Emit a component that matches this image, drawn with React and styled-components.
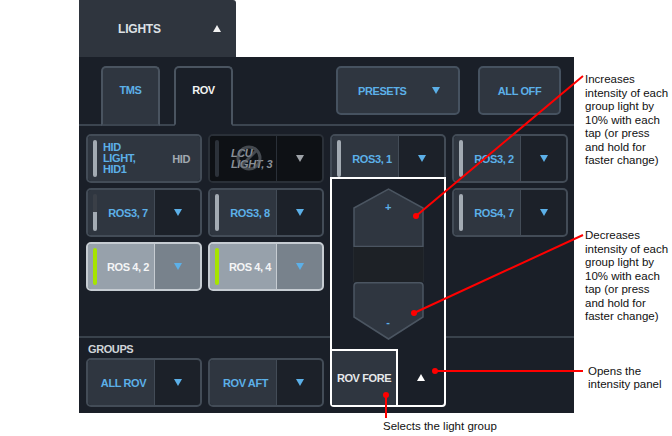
import React from 'react';
import styled, { createGlobalStyle } from 'styled-components';

const GlobalStyle = createGlobalStyle`
  html, body {
    margin: 0;
    padding: 0;
    background: #ffffff;
  }
  body {
    font-family: "Liberation Sans", Arial, sans-serif;
  }
`;

const BLUE = '#5cb0e8';
const PANEL = '#1a1f28';

const Page = styled.div`
  position: relative;
  width: 672px;
  height: 436px;
  overflow: hidden;
  box-sizing: border-box;
  padding-left: 79px;
`;

const Console = styled.div`
  width: 495px;
  display: flex;
  flex-direction: column;
  font-weight: bold;
  font-size: 11px;
  letter-spacing: -0.4px;
`;

const HeaderTab = styled.div`
  width: 157px;
  height: 57px;
  box-sizing: border-box;
  background: #2f353e;
  border-radius: 0 3px 0 0;
  display: flex;
  align-items: center;
  justify-content: space-between;
  padding: 0 15px 0 39px;
  color: #dde1e5;
  font-size: 12px;
  letter-spacing: -0.2px;
`;

const Triangle = styled.span`
  width: 0;
  height: 0;
  border-left: ${(p) => p.$w || 4.5}px solid transparent;
  border-right: ${(p) => p.$w || 4.5}px solid transparent;
  ${(p) => (p.$up ? 'border-bottom' : 'border-top')}: ${(p) => p.$h || 7}px solid ${(p) => p.$color || BLUE};
`;

const Panel = styled.div`
  position: relative;
  height: 356px;
  background: ${PANEL};
  display: flex;
  flex-direction: column;
`;

const TabBar = styled.div`
  height: 69px;
  box-sizing: border-box;
  display: flex;
  align-items: flex-start;
  padding: 9px 13px 0 22px;
  border-bottom: 2px solid #3c4550;
`;

const Tab = styled.div`
  align-self: stretch;
  margin-bottom: -2px;
  width: 59px;
  margin-right: 14px;
  box-sizing: border-box;
  border: 2px solid #4a5460;
  border-bottom: 2px solid ${(p) => (p.$active ? PANEL : '#3c4550')};
  border-radius: 5px 5px 0 0;
  background: ${(p) => (p.$active ? PANEL : '#2f3640')};
  color: ${(p) => (p.$active ? '#f2f2f2' : BLUE)};
  text-align: center;
  padding-top: 15px;
  line-height: 14px;
`;

const ActionButton = styled.div`
  width: ${(p) => p.$width}px;
  height: 49px;
  margin-left: ${(p) => p.$gap};
  box-sizing: border-box;
  background: #2f3640;
  border: 2px solid #465260;
  border-radius: 5px;
  color: ${BLUE};
  display: flex;
  align-items: center;
  justify-content: ${(p) => (p.$split ? 'space-between' : 'center')};
  padding: ${(p) => (p.$split ? '0 18px 0 20px' : '0')};
`;

const Grid = styled.div`
  display: grid;
  grid-template-columns: repeat(4, 116px);
  grid-auto-rows: 49px;
  gap: 5px 6px;
  padding: 8px 6px 0 7px;
`;

const cardColors = {
  normal: { main: '#2f3640', side: '#1c2129', border: '#434c57', text: BLUE },
  selected: { main: '#97a1ab', side: '#78828c', border: '#c6ccd2', text: '#f4f5f6' },
  disabled: { main: '#0e1115', side: '#0e1115', border: '#2a3038', text: '#8a9097' },
};

const Card = styled.div`
  display: flex;
  box-sizing: border-box;
  border-radius: 5px;
  overflow: hidden;
  border: 2px solid ${(p) => cardColors[p.$variant].border};
  background: ${(p) => cardColors[p.$variant].side};
  color: ${(p) => cardColors[p.$variant].text};
`;

const CardMain = styled.div`
  position: relative;
  width: ${(p) => (p.$wide ? 'auto' : '67px')};
  flex: ${(p) => (p.$wide ? '1' : 'none')};
  display: flex;
  align-items: center;
  padding: 0 ${(p) => (p.$wide ? '10px' : '0')} 0 5px;
  box-sizing: border-box;
  background: ${(p) => cardColors[p.$variant].main};
  border-right: ${(p) => (p.$wide ? 'none' : `1px solid ${cardColors[p.$variant].border}`)};
`;

const CardSide = styled.div`
  flex: 1;
  display: flex;
  align-items: center;
  justify-content: center;
`;

const barFill = {
  on: '#a3abb3',
  off: '#2c323a',
  half: 'linear-gradient(to bottom, #3a3f47 50%, #a3abb3 50%)',
  green: '#a6e400',
};

const Bar = styled.span`
  flex: none;
  align-self: stretch;
  width: 4px;
  margin: 4px 0;
  border-radius: 2px;
  background: ${(p) => barFill[p.$level]};
`;

const Label = styled.span`
  flex: 1;
  text-align: center;
  white-space: nowrap;
  padding-left: ${(p) => (p.$afterBar ? 5 : 0)}px;
`;

const StackLabel = styled.span`
  margin-left: ${(p) => p.$offset || 6}px;
  line-height: 11px;
  white-space: pre;
  font-style: ${(p) => (p.$italic ? 'italic' : 'normal')};
`;

const Muted = styled.span`
  margin-left: auto;
  color: #a2a9b0;
`;

const NoSign = styled.svg`
  position: absolute;
  left: 26px;
  top: 9px;
  opacity: 0.6;
`;

const Groups = styled.div`
  margin-top: auto;
  border-top: 2px solid #39424c;
  padding: 4px 6px 6px 7px;
`;

const GroupsLabel = styled.div`
  color: #d0d4d8;
  line-height: 14px;
  margin-left: 2px;
`;

const GroupRow = styled(Grid)`
  padding: 0;
  margin-top: 2px;
`;

const Popup = styled.div`
  position: absolute;
  left: 251px;
  top: 120px;
  width: 116px;
  height: 230px;
  box-sizing: border-box;
  border: 2px solid #ffffff;
  border-radius: 0 0 4px 4px;
  background: ${PANEL};
  display: flex;
  flex-direction: column;
  align-items: center;
  padding-top: 9px;
  z-index: 1;
`;

const Step = styled.div`
  position: relative;
  width: 71px;
  height: ${(p) => p.$h}px;
  color: ${BLUE};
  text-align: center;
  line-height: 14px;
  box-sizing: border-box;
  padding-top: ${(p) => p.$pad}px;
  & > svg {
    position: absolute;
    left: 0;
    top: 0;
  }
  & > span {
    position: relative;
  }
`;

const StepGap = styled.div`
  width: 71px;
  height: 35px;
  box-sizing: border-box;
  background: #1d2126;
  border-left: 1px solid #23282e;
  border-right: 1px solid #23282e;
`;

const PopupFooter = styled.div`
  margin-top: auto;
  align-self: stretch;
  height: 56px;
  display: flex;
`;

const ForeBox = styled.div`
  width: 66px;
  box-sizing: border-box;
  border-top: 2px solid #ffffff;
  border-right: 2px solid #ffffff;
  background: #2f3640;
  color: #e6e8ea;
  display: flex;
  align-items: center;
  justify-content: center;
  white-space: nowrap;
`;

const FooterSide = styled.div`
  flex: 1;
  display: flex;
  align-items: center;
  justify-content: center;
`;

const Overlay = styled.svg`
  position: absolute;
  left: 0;
  top: 0;
  pointer-events: none;
  z-index: 2;
`;

const Callout = styled.div`
  position: absolute;
  left: ${(p) => p.$x}px;
  top: ${(p) => p.$y}px;
  font-family: "Liberation Sans", Arial, sans-serif;
  font-size: 11.5px;
  line-height: ${(p) => p.$lh || 13.5}px;
  color: #111111;
  white-space: pre;
`;

function LightCard({ name, level = 'on', variant = 'normal' }) {
  return (
    <Card $variant={variant}>
      <CardMain $variant={variant}>
        <Bar $level={level} />
        <Label $afterBar>{name}</Label>
      </CardMain>
      <CardSide>
        <Triangle />
      </CardSide>
    </Card>
  );
}

function GroupCard({ name }) {
  return (
    <Card $variant="normal">
      <CardMain $variant="normal">
        <Label>{name}</Label>
      </CardMain>
      <CardSide>
        <Triangle />
      </CardSide>
    </Card>
  );
}

function App() {
  return (
    <Page>
      <GlobalStyle />
      <Console>
        <HeaderTab>
          LIGHTS
          <Triangle $up $color="#f2f2f2" $w={4} />
        </HeaderTab>
        <Panel>
          <TabBar>
            <Tab>TMS</Tab>
            <Tab $active>ROV</Tab>
            <ActionButton $width={124} $gap="auto" $split>
              PRESETS
              <Triangle />
            </ActionButton>
            <ActionButton $width={83} $gap="18px">
              ALL OFF
            </ActionButton>
          </TabBar>

          <Grid>
            <Card $variant="normal">
              <CardMain $variant="normal" $wide>
                <Bar $level="on" />
                <StackLabel>{'HID\nLIGHT,\nHID1'}</StackLabel>
                <Muted>HID</Muted>
              </CardMain>
            </Card>
            <Card $variant="disabled">
              <CardMain $variant="disabled">
                <Bar $level="off" />
                <StackLabel $offset={12} $italic>{'LCU\nLIGHT, 3'}</StackLabel>
                <NoSign width="26" height="26" viewBox="0 0 26 26">
                  <circle cx="13" cy="13" r="11" fill="none" stroke="#6a7078" strokeWidth="3" />
                  <line x1="20.5" y1="5.5" x2="5.5" y2="20.5" stroke="#6a7078" strokeWidth="3" />
                </NoSign>
              </CardMain>
              <CardSide>
                <Triangle $color="#9ea3a8" />
              </CardSide>
            </Card>
            <LightCard name="ROS3, 1" />
            <LightCard name="ROS3, 2" />

            <LightCard name="ROS3, 7" level="half" />
            <LightCard name="ROS3, 8" />
            <div />
            <LightCard name="ROS4, 7" />

            <LightCard name="ROS 4, 2" level="green" variant="selected" />
            <LightCard name="ROS 4, 4" level="green" variant="selected" />
          </Grid>

          <Groups>
            <GroupsLabel>GROUPS</GroupsLabel>
            <GroupRow>
              <GroupCard name="ALL ROV" />
              <GroupCard name="ROV AFT" />
            </GroupRow>
          </Groups>

          <Popup>
            <Step $h={59} $pad={12}>
              <svg width="71" height="59" viewBox="0 0 71 59">
                <path d="M1 20 L35.5 1 L70 20 L70 58.5 L1 58.5 Z" fill="#2f3640" stroke="#4b5561" strokeWidth="1.5" />
              </svg>
              <span>+</span>
            </Step>
            <StepGap />
            <Step $h={58} $pad={33}>
              <svg width="71" height="58" viewBox="0 0 71 58">
                <path d="M1 4 Q1 0.75 4 0.75 L67 0.75 Q70 0.75 70 4 L70 35 L35.5 57 L1 35 Z" fill="#2f3640" stroke="#4b5561" strokeWidth="1.5" />
              </svg>
              <span>-</span>
            </Step>
            <PopupFooter>
              <ForeBox>ROV FORE</ForeBox>
              <FooterSide>
                <Triangle $up $color="#ffffff" />
              </FooterSide>
            </PopupFooter>
          </Popup>
        </Panel>
      </Console>

      <Overlay width="672" height="436" viewBox="0 0 672 436">
        <g stroke="#ff0000" strokeWidth="2" fill="none">
          <line x1="416" y1="216" x2="583" y2="76" />
          <line x1="414" y1="313" x2="583" y2="235" />
          <line x1="435" y1="371" x2="583" y2="371" />
          <line x1="386" y1="395" x2="386" y2="418" />
        </g>
        <g fill="#ff0000">
          <circle cx="416" cy="216" r="3" />
          <circle cx="414" cy="313" r="3" />
          <circle cx="435" cy="371" r="3" />
          <circle cx="386" cy="395" r="3" />
        </g>
      </Overlay>

      <Callout $x={585} $y={73}>
        {'Increases\nintensity of each\ngroup light by\n10% with each\ntap (or press\nand hold for\nfaster change)'}
      </Callout>
      <Callout $x={585} $y={229}>
        {'Decreases\nintensity of each\ngroup light by\n10% with each\ntap (or press\nand hold for\nfaster change)'}
      </Callout>
      <Callout $x={588} $y={365} $lh={13}>
        {'Opens the\nintensity panel'}
      </Callout>
      <Callout $x={383} $y={420}>
        Selects the light group
      </Callout>
    </Page>
  );
}

export default App;
